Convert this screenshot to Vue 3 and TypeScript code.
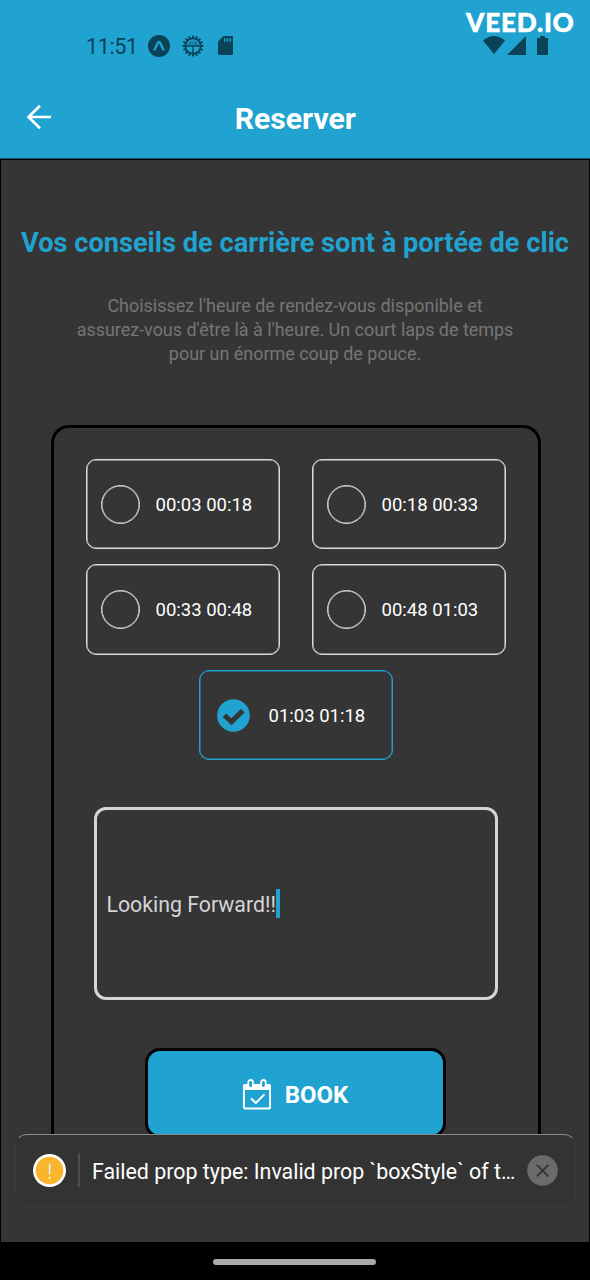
<script setup lang="ts">
import { ref } from 'vue'

interface Slot {
  id: number
  label: string
}

const slots: Slot[] = [
  { id: 1, label: '00:03 00:18' },
  { id: 2, label: '00:18 00:33' },
  { id: 3, label: '00:33 00:48' },
  { id: 4, label: '00:48 01:03' },
  { id: 5, label: '01:03 01:18' },
]
const selected = ref<number>(5)
const message = ref<string>('Looking Forward!!')
const warningOpen = ref<boolean>(true)
const teeth: number[] = Array.from({ length: 16 }, (_, i) => i * 22.5)
</script>

<template>
  <div class="screen">
    <header class="top">
      <div class="status">
        <span class="clock">11:51</span>
        <svg class="ic-expo" viewBox="0 0 22 22">
          <circle cx="11" cy="11" r="11" fill="#0a4257" />
          <path d="M6.2 15.6 L10 7.6 Q11 6.2 12 7.6 L15.8 15.6" fill="none" stroke="#20a3d0" stroke-width="2.3" stroke-linejoin="round" />
        </svg>
        <svg class="ic-gear" viewBox="0 0 22 22">
          <g fill="#0a4257">
            <rect v-for="a in teeth" :key="a" x="10" y="0.6" width="2" height="3" :transform="`rotate(${a} 11 11)`" />
          </g>
          <circle cx="11" cy="11" r="7.7" fill="none" stroke="#0a4257" stroke-width="1.7" />
          <path d="M5 10.8 A6 5.2 0 0 1 17 10.8 Z" fill="#0a4257" opacity="0.3" />
          <path d="M4 11 H18 M11 11 V19" stroke="#0a4257" stroke-width="1.4" />
          <circle cx="8.4" cy="8.2" r="0.6" fill="#0a4257" />
          <circle cx="13.6" cy="8.2" r="0.6" fill="#0a4257" />
        </svg>
        <svg class="ic-sd" viewBox="0 0 15 19">
          <path d="M5.6 0 H13.8 Q15 0 15 1.2 V17.8 Q15 19 13.8 19 H1.2 Q0 19 0 17.8 V5.6 Z" fill="#0a4257" />
          <path d="M6.8 2.2 V5.8 M9.6 2.2 V5.8 M12.4 2.2 V5.8" stroke="#20a3d0" stroke-width="1.5" />
        </svg>
        <div class="right">
          <span class="brand">VEED.IO</span>
          <div class="signals">
            <svg class="ic-wifi" viewBox="0 0 22 18"><path d="M0 4.6 Q11 -4.6 22 4.6 L11 18 Z" fill="#0a4257" /></svg>
            <svg class="ic-cell" viewBox="0 0 19 19"><path d="M19 0 V19 H0 Z" fill="#0a4257" /></svg>
            <svg class="ic-bat" viewBox="0 0 11 19"><path d="M3.2 0 H7.8 V2 H11 V19 H0 V2 H3.2 Z" fill="#0a4257" /></svg>
          </div>
        </div>
      </div>
      <div class="bar">
        <svg class="back" viewBox="0 0 26 26">
          <path d="M14 1.8 L2.5 13 L14 24.2 M2.5 13 H25" fill="none" stroke="#fff" stroke-width="2.7" />
        </svg>
        <h1>Reserver</h1>
        <span class="bar-end"></span>
      </div>
    </header>

    <main class="body">
      <div class="scroll">
        <h2>Vos conseils de carrière sont à portée de clic</h2>
        <p class="lead">Choisissez l'heure de rendez-vous disponible et<br />assurez-vous d'être là à l'heure. Un court laps de temps<br />pour un énorme coup de pouce.</p>
        <section class="card">
          <div class="slots">
            <div v-for="s in slots" :key="s.id" class="slot" :class="{ on: s.id === selected }" @click="selected = s.id">
              <span class="mark">
                <svg v-if="s.id === selected" class="check" viewBox="0 0 33 33">
                  <circle cx="16.5" cy="16.5" r="16.3" fill="#20a3d0" />
                  <path d="M7.4 16.2 L14.4 22.8 L25.8 11.6" fill="none" stroke="#353535" stroke-width="5" />
                </svg>
                <span v-else class="radio"></span>
              </span>
              <span class="time">{{ s.label }}</span>
            </div>
          </div>
          <div class="note">
            <span>{{ message }}</span><i class="caret"></i>
          </div>
          <div class="book">
            <svg class="cal" viewBox="0 0 28 31">
              <path d="M1.6 5 H26.4 Q28 5 28 6.6 V28.4 Q28 30.4 26 30.4 H2 Q0 30.4 0 28.4 V6.6 Q0 5 1.6 5 Z" fill="#fff" />
              <rect x="1.9" y="11" width="24.2" height="17.6" rx="0.6" fill="#20a3d0" />
              <rect x="5.3" y="1" width="4.6" height="8" rx="2.3" fill="#20a3d0" stroke="#fff" stroke-width="1.8" />
              <rect x="18.1" y="1" width="4.6" height="8" rx="2.3" fill="#20a3d0" stroke="#fff" stroke-width="1.8" />
              <path d="M8 19.4 L12.8 24 L21.4 15.4" fill="none" stroke="#fff" stroke-width="2" />
            </svg>
            <span>BOOK</span>
          </div>
        </section>
      </div>

      <div v-if="warningOpen" class="toast">
        <svg class="warn" viewBox="0 0 33 33">
          <circle cx="16.5" cy="16.5" r="16.5" fill="#fff" />
          <circle cx="16.5" cy="16.5" r="13.8" fill="#fab52d" />
          <path d="M16.6 9.6 V20" stroke="#c9a765" stroke-width="2.9" />
          <path d="M16.6 9.4 V20.2 M16.6 22.8 V25" stroke="#fff3d8" stroke-width="1.7" />
        </svg>
        <span class="sep"></span>
        <span class="msg">Failed prop type: Invalid prop `boxStyle` of t…</span>
        <svg class="close" viewBox="0 0 31 31" @click="warningOpen = false">
          <circle cx="15.5" cy="15.5" r="15.3" fill="#6b6b6d" />
          <path d="M9.8 9.8 L21.4 21.4 M21.4 9.8 L9.8 21.4" stroke="#343434" stroke-width="1.7" />
        </svg>
      </div>
    </main>

    <footer class="nav"><span class="pill"></span></footer>
  </div>
</template>

<style>
body {
  margin: 0;
  background: #000;
}
</style>

<style scoped>
.screen {
  width: 590px;
  height: 1280px;
  display: flex;
  flex-direction: column;
  overflow: hidden;
  background: #000;
  font-family: Roboto, sans-serif;
}
.top {
  height: 158px;
  flex: none;
  background: #20a3d0;
  border-bottom: 1px solid #12566e;
}
.status {
  height: 78px;
  display: flex;
  align-items: flex-start;
}
.clock {
  margin: 34px 0 0 86px;
  width: 62px;
  font-size: 21.6px;
  line-height: 26px;
  letter-spacing: -0.4px;
  color: #0a4257;
}
.ic-expo {
  width: 22px;
  height: 22px;
  margin-top: 34.5px;
}
.ic-gear {
  width: 22px;
  height: 22px;
  margin: 34.5px 0 0 11.5px;
}
.ic-sd {
  width: 15px;
  height: 19px;
  margin: 36px 0 0 14.5px;
}
.right {
  margin-left: auto;
  width: 124px;
  padding-top: 9px;
}
.brand {
  display: block;
  font-family: Lato, sans-serif;
  font-weight: 900;
  font-size: 26.2px;
  line-height: 27px;
  letter-spacing: 0.75px;
  color: #fff;
  -webkit-text-stroke: 0.5px #fff;
  white-space: nowrap;
}
.signals {
  display: flex;
  padding-left: 17px;
}
.ic-wifi {
  width: 22px;
  height: 18px;
}
.ic-cell {
  width: 19px;
  height: 19px;
  margin-left: 2px;
}
.ic-bat {
  width: 11px;
  height: 19px;
  margin-left: 11px;
}
.bar {
  height: 80px;
  display: flex;
  align-items: center;
}
.back {
  width: 26px;
  height: 26px;
  margin-left: 25.5px;
  margin-top: -3px;
}
h1 {
  flex: 1;
  margin: 1px 0 0;
  text-align: center;
  color: #fff;
  font-size: 30.2px;
  font-weight: 700;
  line-height: 36px;
}
.bar-end {
  width: 51px;
}
.body {
  height: 1082px;
  flex: none;
  margin: 1px 1px 0;
  background: #353535;
}
.scroll {
  height: 974px;
  overflow: hidden;
}
h2 {
  margin: 66px 0 0;
  text-align: center;
  white-space: nowrap;
  font-size: 27.2px;
  line-height: 34px;
  font-weight: 700;
  color: #20a3d0;
}
.lead {
  margin: 34px 0 0;
  text-align: center;
  font-size: 17.95px;
  line-height: 24px;
  color: #757575;
}
.card {
  box-sizing: border-box;
  width: 490px;
  height: 740px;
  margin: 59px 0 0 49.5px;
  border: 3px solid #000;
  border-radius: 18px;
  padding-top: 31px;
}
.slots {
  display: flex;
  flex-wrap: wrap;
  justify-content: center;
  gap: 15px 32px;
}
.slot {
  box-sizing: border-box;
  width: 194px;
  height: 90.3px;
  border: 1px solid #dcdcdc;
  box-shadow: inset 0 0 0 0.5px #dcdcdc;
  border-radius: 10px;
  display: flex;
  align-items: center;
}
.slot.on {
  border-color: #20a3d0;
  box-shadow: inset 0 0 0 0.5px #20a3d0;
}
.mark {
  width: 39px;
  height: 39px;
  margin-left: 14px;
  display: flex;
  align-items: center;
  justify-content: center;
}
.radio {
  box-sizing: border-box;
  width: 39px;
  height: 39px;
  border: 1px solid #dcdcdc;
  box-shadow: inset 0 0 0 0.5px #dcdcdc;
  border-radius: 50%;
}
.check {
  width: 33px;
  height: 33px;
  margin-top: 2px;
}
.time {
  margin: 2px 0 0 16px;
  font-size: 18.5px;
  line-height: 24px;
  color: #fff;
}
.note {
  box-sizing: border-box;
  width: 404px;
  height: 193px;
  margin: 47px 0 0 40px;
  border: 3px solid #d6d4da;
  border-radius: 12px;
  padding-left: 10px;
  display: flex;
  align-items: center;
  font-size: 21.3px;
  color: #d4d4d8;
}
.note span {
  margin-top: 2px;
}
.caret {
  width: 4px;
  height: 29px;
  background: #20a3d0;
}
.book {
  box-sizing: border-box;
  width: 301px;
  height: 90px;
  margin: 48px 0 0 91.5px;
  border: 3px solid #000;
  border-radius: 15px;
  background: #20a3d0;
  display: flex;
  align-items: center;
  justify-content: center;
  gap: 14px;
  font-size: 24px;
  font-weight: 700;
  color: #fff;
}
.book span {
  margin-top: 4px;
}
.cal {
  width: 28px;
  height: 31px;
  margin-top: 3px;
}
.toast {
  box-sizing: border-box;
  width: 561px;
  height: 72px;
  margin-left: 14px;
  background: #333;
  border: 1px solid #3a3a3a;
  border-top-color: #8a8a8a;
  border-radius: 12px;
  display: flex;
  align-items: center;
}
.warn {
  width: 33px;
  height: 33px;
  margin-left: 17px;
}
.sep {
  width: 2px;
  height: 34px;
  margin-left: 12px;
  background: #4e4e4e;
}
.msg {
  margin: 3px 0 0 12px;
  width: 435px;
  flex: none;
  font-size: 21.4px;
  line-height: 28px;
  color: #fff;
  white-space: nowrap;
}
.close {
  width: 31px;
  height: 31px;
  margin-top: 1px;
}
.nav {
  height: 38px;
  display: flex;
  justify-content: center;
}
.pill {
  width: 163px;
  height: 6px;
  margin: 17px 1px 0 0;
  border-radius: 3px;
  background: #a9a9a9;
}
</style>
